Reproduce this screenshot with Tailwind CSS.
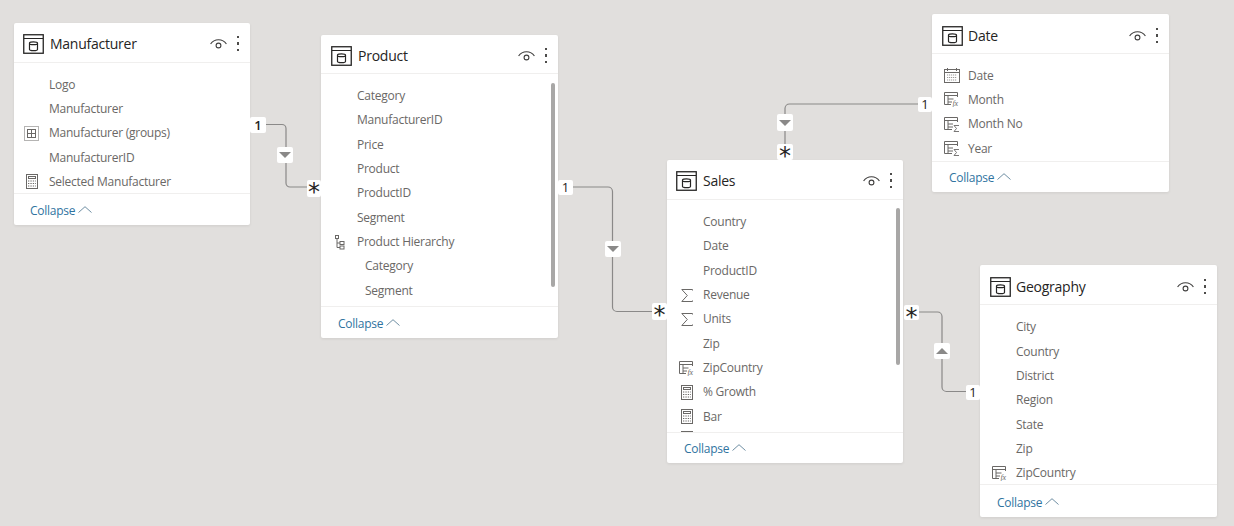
<!DOCTYPE html>
<html>
<head>
<meta charset="utf-8">
<script src="https://cdn.jsdelivr.net/npm/@tailwindcss/browser@4"></script>
</head>
<body class="m-0">
<svg width="0" height="0" class="absolute">
  <defs>
    <symbol id="tbl" viewBox="0 0 21 20" fill="none" stroke="#252423">
      <rect x=".75" y=".75" width="19.5" height="18.5" stroke-width="1.3"/>
      <path d="M1 4.500H20" stroke-width="1"/>
      <path d="M6.500 9c0-1.600 8-1.600 8 0v6.500c0 1.600-8 1.600-8 0zM6.500 9.400c0 1.600 8 1.600 8 0" stroke-width="1.200"/>
    </symbol>
    <symbol id="eye" viewBox="0 0 17 12" fill="none" stroke="#3f3e3d" stroke-width="1.100">
      <path d="M.6 6C4.300 .3 12.700 .3 16.400 6"/>
      <circle cx="8.500" cy="7.500" r="2.400"/>
    </symbol>
    <symbol id="calc" viewBox="0 0 12 15" fill="none" stroke="#6a6866">
      <rect x=".5" y=".5" width="11" height="14"/>
      <rect x="2.500" y="2.500" width="7" height="2"/>
      <path d="M2 7h8M2 9.500h8M2 12h8" stroke-dasharray="1.300 1.100" stroke-width="1.100"/>
    </symbol>
    <symbol id="group" viewBox="0 0 15 15" fill="none" stroke="#6a6866">
      <rect x=".5" y=".5" width="14" height="14" stroke-dasharray="1 1"/>
      <rect x="3.500" y="3.500" width="8" height="8"/>
      <path d="M7.500 3.500v8M3.500 7.500h8"/>
    </symbol>
    <symbol id="hier" viewBox="0 0 10 15" fill="none" stroke="#6a6866">
      <rect x=".5" y=".5" width="3" height="3"/>
      <path d="M2 3.500V12.500H5M2 8H5"/>
      <rect x="5" y="6.500" width="4" height="3"/>
      <rect x="5" y="11" width="4" height="3"/>
    </symbol>
    <symbol id="sum" viewBox="0 0 12 13" fill="none" stroke="#6a6866" stroke-width="1">
      <path d="M11.500 1.500V.5H.8L6.300 6.500.8 12.500H11.500V11.500"/>
    </symbol>
    <symbol id="cal" viewBox="0 0 16 15" fill="none" stroke="#6a6866">
      <rect x=".5" y="1.500" width="15" height="13"/>
      <path d="M1 4.500H15M3.500 0v3M12.500 0v3"/>
      <path d="M3 7h10M3 9.500h10M3 12h10" stroke="#9c9a98" stroke-dasharray="1.200 .8" stroke-width="1.200"/>
    </symbol>
    <symbol id="fx" viewBox="0 0 16 15" fill="none" stroke="#6a6866">
      <path d="M.5 .5H13.500V5M.5 .5V12.500H7M.5 3.500H13.500M4 3.500V12.500M4 7H9.500M4 10H8"/>
      <text x="8.500" y="14" font-family="Liberation Serif, serif" font-style="italic" font-size="8" fill="#6a6866" stroke="none">fx</text>
    </symbol>
    <symbol id="tsum" viewBox="0 0 16 15" fill="none" stroke="#6a6866">
      <path d="M.5 .5H13.500V5M.5 .5V12.500H8M.5 3.500H13.500M4 3.500V12.500M4 7H9M4 10H9"/>
      <path d="M15 8.500H10L12.500 11.500 10 14.500H15" stroke-width=".9"/>
    </symbol>
    <symbol id="chev" viewBox="0 0 14 7" fill="none" stroke="#6f8ea3" stroke-width="1">
      <path d="M.5 6.500 7 .7 13.500 6.500"/>
    </symbol>
  </defs>
</svg>

<div class="relative w-[1234px] h-[526px] overflow-hidden bg-[#e1dfdd] font-['Open_Sans','Noto_Sans',sans-serif]">

  <!-- relationship lines -->
  <svg class="absolute inset-0" width="1234" height="526" fill="none" stroke="#8a8988" stroke-width="1.200">
    <path d="M264 124.500H282a4 4 0 0 1 4 4V183a4 4 0 0 0 4 4H308"/>
    <path d="M572 187H608a4.500 4.500 0 0 1 4.500 4.500V307a4.500 4.500 0 0 0 4.500 4.500H653"/>
    <path d="M919 104H789.500a4.500 4.500 0 0 0-4.500 4.500V146"/>
    <path d="M918 312H937.500a4.500 4.500 0 0 1 4.500 4.500V387a4.500 4.500 0 0 0 4.500 4.500H967"/>
  </svg>

  <!-- Manufacturer -->
  <section class="absolute left-[14px] top-[23px] w-[236px] h-[202px] flex flex-col bg-white rounded-[2px] shadow-[0_1px_3px_rgba(0,0,0,0.08)]">
    <header class="h-[40px] flex items-center border-b border-[#f0efee] shrink-0 pt-[2px] pl-[9px] pr-[11px]">
      <svg class="w-[21px] h-[20px] shrink-0"><use href="#tbl"/></svg>
      <h2 class="ml-[6px] flex-1 text-[14px] font-medium leading-none text-[#252423] tracking-[-0.25px]">Manufacturer</h2>
      <svg class="w-[17px] h-[12px] mr-[10px]"><use href="#eye"/></svg>
      <span class="flex flex-col gap-[4px]"><i class="w-[2px] h-[2.500px] bg-[#4d4c4a]"></i><i class="w-[2px] h-[2.500px] bg-[#4d4c4a]"></i><i class="w-[2px] h-[2.500px] bg-[#4d4c4a]"></i></span>
    </header>
    <ul class="flex-1 overflow-hidden pt-[9.500px] text-[12px] text-[#6a6866] tracking-[-0.25px]">
      <li class="h-[24.330px] flex items-center pl-[35px]">Logo</li>
      <li class="h-[24.330px] flex items-center pl-[35px]">Manufacturer</li>
      <li class="h-[24.330px] flex items-center pl-[10px]"><svg class="w-[15px] h-[15px] mr-[10px]"><use href="#group"/></svg>Manufacturer (groups)</li>
      <li class="h-[24.330px] flex items-center pl-[35px]">ManufacturerID</li>
      <li class="h-[24.330px] flex items-center pl-[12px]"><svg class="w-[12px] h-[15px] mr-[11px]"><use href="#calc"/></svg>Selected Manufacturer</li>
    </ul>
    <footer class="h-[32px] shrink-0 flex items-center border-t border-[#f0efee] pt-[2px] pl-[16px] text-[12px] text-[#2f749f] tracking-[-0.25px]">Collapse<svg class="w-[14px] h-[7px] ml-[3px] -mt-[3px]"><use href="#chev"/></svg></footer>
  </section>

  <!-- Product -->
  <section class="absolute left-[321px] top-[35px] w-[237px] h-[303px] flex flex-col bg-white rounded-[2px] shadow-[0_1px_3px_rgba(0,0,0,0.08)]">
    <header class="h-[39px] flex items-center border-b border-[#f0efee] shrink-0 pt-[3px] pl-[10px] pr-[11px]">
      <svg class="w-[21px] h-[20px] shrink-0"><use href="#tbl"/></svg>
      <h2 class="ml-[6px] flex-1 text-[14px] font-medium leading-none text-[#252423] tracking-[-0.25px]">Product</h2>
      <svg class="w-[17px] h-[12px] mr-[10px]"><use href="#eye"/></svg>
      <span class="flex flex-col gap-[4px]"><i class="w-[2px] h-[2.500px] bg-[#4d4c4a]"></i><i class="w-[2px] h-[2.500px] bg-[#4d4c4a]"></i><i class="w-[2px] h-[2.500px] bg-[#4d4c4a]"></i></span>
    </header>
    <ul class="flex-1 overflow-hidden pt-[10px] text-[12px] text-[#6a6866] tracking-[-0.25px]">
      <li class="h-[24.330px] flex items-center pl-[36px]">Category</li>
      <li class="h-[24.330px] flex items-center pl-[36px]">ManufacturerID</li>
      <li class="h-[24.330px] flex items-center pl-[36px]">Price</li>
      <li class="h-[24.330px] flex items-center pl-[36px]">Product</li>
      <li class="h-[24.330px] flex items-center pl-[36px]">ProductID</li>
      <li class="h-[24.330px] flex items-center pl-[36px]">Segment</li>
      <li class="h-[24.330px] flex items-center pl-[14px]"><svg class="w-[10px] h-[15px] mr-[12px]"><use href="#hier"/></svg>Product Hierarchy</li>
      <li class="h-[24.330px] flex items-center pl-[44px]">Category</li>
      <li class="h-[24.330px] flex items-center pl-[44px]">Segment</li>
    </ul>
    <footer class="h-[32px] shrink-0 flex items-center border-t border-[#f0efee] pt-[2px] pl-[17px] text-[12px] text-[#2f749f] tracking-[-0.25px]">Collapse<svg class="w-[14px] h-[7px] ml-[3px] -mt-[3px]"><use href="#chev"/></svg></footer>
    <div class="absolute left-[230px] top-[48px] w-[4px] h-[204px] rounded-full bg-[#a8a7a6]"></div>
  </section>

  <!-- Sales -->
  <section class="absolute left-[667px] top-[160px] w-[236px] h-[303px] flex flex-col bg-white rounded-[2px] shadow-[0_1px_3px_rgba(0,0,0,0.08)]">
    <header class="h-[40px] flex items-center border-b border-[#f0efee] shrink-0 pt-[2px] pl-[9px] pr-[11px]">
      <svg class="w-[21px] h-[20px] shrink-0"><use href="#tbl"/></svg>
      <h2 class="ml-[6px] flex-1 text-[14px] font-medium leading-none text-[#252423] tracking-[-0.25px]">Sales</h2>
      <svg class="w-[17px] h-[12px] mr-[10px]"><use href="#eye"/></svg>
      <span class="flex flex-col gap-[4px]"><i class="w-[2px] h-[2.500px] bg-[#4d4c4a]"></i><i class="w-[2px] h-[2.500px] bg-[#4d4c4a]"></i><i class="w-[2px] h-[2.500px] bg-[#4d4c4a]"></i></span>
    </header>
    <ul class="flex-1 overflow-hidden pt-[10px] text-[12px] text-[#6a6866] tracking-[-0.25px]">
      <li class="h-[24.330px] flex items-center pl-[36px]">Country</li>
      <li class="h-[24.330px] flex items-center pl-[36px]">Date</li>
      <li class="h-[24.330px] flex items-center pl-[36px]">ProductID</li>
      <li class="h-[24.330px] flex items-center pl-[14px]"><svg class="w-[12px] h-[13px] mr-[10px]"><use href="#sum"/></svg>Revenue</li>
      <li class="h-[24.330px] flex items-center pl-[14px]"><svg class="w-[12px] h-[13px] mr-[10px]"><use href="#sum"/></svg>Units</li>
      <li class="h-[24.330px] flex items-center pl-[36px]">Zip</li>
      <li class="h-[24.330px] flex items-center pl-[12px]"><svg class="w-[16px] h-[15px] mr-[8px]"><use href="#fx"/></svg>ZipCountry</li>
      <li class="h-[24.330px] flex items-center pl-[14px]"><svg class="w-[12px] h-[15px] mr-[10px]"><use href="#calc"/></svg>% Growth</li>
      <li class="h-[24.330px] flex items-center pl-[14px]"><svg class="w-[12px] h-[15px] mr-[10px]"><use href="#calc"/></svg>Bar</li>
      <li class="h-[24.330px] flex items-start pt-[2px] pl-[14px]"><svg class="w-[12px] h-[15px] mr-[10px]"><use href="#calc"/></svg></li>
    </ul>
    <footer class="h-[31px] shrink-0 flex items-center border-t border-[#f0efee] pt-[2px] pl-[17px] text-[12px] text-[#2f749f] tracking-[-0.25px]">Collapse<svg class="w-[14px] h-[7px] ml-[3px] -mt-[3px]"><use href="#chev"/></svg></footer>
    <div class="absolute left-[229px] top-[48px] w-[4px] h-[157px] rounded-full bg-[#a8a7a6]"></div>
  </section>

  <!-- Date -->
  <section class="absolute left-[932px] top-[14px] w-[237px] h-[178px] flex flex-col bg-white rounded-[2px] shadow-[0_1px_3px_rgba(0,0,0,0.08)]">
    <header class="h-[40px] flex items-center border-b border-[#f0efee] shrink-0 pt-[4px] pl-[10px] pr-[11px]">
      <svg class="w-[21px] h-[20px] shrink-0"><use href="#tbl"/></svg>
      <h2 class="ml-[5px] flex-1 text-[14px] font-medium leading-none text-[#252423] tracking-[-0.25px]">Date</h2>
      <svg class="w-[17px] h-[12px] mr-[10px]"><use href="#eye"/></svg>
      <span class="flex flex-col gap-[4px]"><i class="w-[2px] h-[2.500px] bg-[#4d4c4a]"></i><i class="w-[2px] h-[2.500px] bg-[#4d4c4a]"></i><i class="w-[2px] h-[2.500px] bg-[#4d4c4a]"></i></span>
    </header>
    <ul class="flex-1 overflow-hidden pt-[9.500px] text-[12px] text-[#6a6866] tracking-[-0.25px]">
      <li class="h-[24.330px] flex items-center pl-[12px]"><svg class="w-[16px] h-[15px] mr-[8px]"><use href="#cal"/></svg>Date</li>
      <li class="h-[24.330px] flex items-center pl-[12px]"><svg class="w-[16px] h-[15px] mr-[8px]"><use href="#fx"/></svg>Month</li>
      <li class="h-[24.330px] flex items-center pl-[12px]"><svg class="w-[16px] h-[15px] mr-[8px]"><use href="#tsum"/></svg>Month No</li>
      <li class="h-[24.330px] flex items-center pl-[12px]"><svg class="w-[16px] h-[15px] mr-[8px]"><use href="#tsum"/></svg>Year</li>
    </ul>
    <footer class="h-[31px] shrink-0 flex items-center border-t border-[#f0efee] pt-[2px] pl-[17px] text-[12px] text-[#2f749f] tracking-[-0.25px]">Collapse<svg class="w-[14px] h-[7px] ml-[3px] -mt-[3px]"><use href="#chev"/></svg></footer>
  </section>

  <!-- Geography -->
  <section class="absolute left-[980px] top-[265px] w-[237px] h-[252px] flex flex-col bg-white rounded-[2px] shadow-[0_1px_3px_rgba(0,0,0,0.08)]">
    <header class="h-[40px] flex items-center border-b border-[#f0efee] shrink-0 pt-[4px] pl-[10px] pr-[11px]">
      <svg class="w-[21px] h-[20px] shrink-0"><use href="#tbl"/></svg>
      <h2 class="ml-[5px] flex-1 text-[14px] font-medium leading-none text-[#252423] tracking-[-0.25px]">Geography</h2>
      <svg class="w-[17px] h-[12px] mr-[10px]"><use href="#eye"/></svg>
      <span class="flex flex-col gap-[4px]"><i class="w-[2px] h-[2.500px] bg-[#4d4c4a]"></i><i class="w-[2px] h-[2.500px] bg-[#4d4c4a]"></i><i class="w-[2px] h-[2.500px] bg-[#4d4c4a]"></i></span>
    </header>
    <ul class="flex-1 overflow-hidden pt-[10.100px] text-[12px] text-[#6a6866] tracking-[-0.25px]">
      <li class="h-[24.330px] flex items-center pl-[36px]">City</li>
      <li class="h-[24.330px] flex items-center pl-[36px]">Country</li>
      <li class="h-[24.330px] flex items-center pl-[36px]">District</li>
      <li class="h-[24.330px] flex items-center pl-[36px]">Region</li>
      <li class="h-[24.330px] flex items-center pl-[36px]">State</li>
      <li class="h-[24.330px] flex items-center pl-[36px]">Zip</li>
      <li class="h-[24.330px] flex items-center pl-[12px]"><svg class="w-[16px] h-[15px] mr-[8px]"><use href="#fx"/></svg>ZipCountry</li>
    </ul>
    <footer class="h-[33px] shrink-0 flex items-center border-t border-[#f0efee] pt-[3px] pl-[17px] text-[12px] text-[#2f749f] tracking-[-0.25px]">Collapse<svg class="w-[14px] h-[7px] ml-[3px] -mt-[3px]"><use href="#chev"/></svg></footer>
  </section>

  <!-- cardinality badges -->
  <span class="absolute left-[250px] top-[117px] w-[16px] h-[16px] flex items-center justify-center bg-white text-[13px] font-semibold leading-none text-[#252423] rounded-[2px]">1</span>
  <span class="absolute left-[307px] top-[180px] w-[14px] h-[17px] flex items-center justify-center bg-white rounded-[2px] font-['DejaVu_Sans',sans-serif] text-[24px] leading-none text-[#252423] pt-[7px]">*</span>
  <span class="absolute left-[558px] top-[180px] w-[15px] h-[15px] flex items-center justify-center bg-white text-[13px] font-medium leading-none text-[#252423] rounded-[2px]">1</span>
  <span class="absolute left-[652px] top-[303px] w-[15px] h-[17px] flex items-center justify-center bg-white rounded-[2px] font-['DejaVu_Sans',sans-serif] text-[24px] leading-none text-[#252423] pt-[7px]">*</span>
  <span class="absolute left-[918px] top-[97px] w-[14px] h-[15px] flex items-center justify-center bg-white text-[13px] font-medium leading-none text-[#252423] rounded-[2px]">1</span>
  <span class="absolute left-[777px] top-[144px] w-[16px] h-[16px] flex items-center justify-center bg-white rounded-[2px] font-['DejaVu_Sans',sans-serif] text-[24px] leading-none text-[#252423] pt-[8px]">*</span>
  <span class="absolute left-[904px] top-[305px] w-[15px] h-[15px] flex items-center justify-center bg-white rounded-[2px] font-['DejaVu_Sans',sans-serif] text-[24px] leading-none text-[#252423] pt-[9px]">*</span>
  <span class="absolute left-[966px] top-[385px] w-[14px] h-[15px] flex items-center justify-center bg-white text-[13px] font-medium leading-none text-[#252423] rounded-[2px]">1</span>

  <!-- direction arrows -->
  <span class="absolute left-[277px] top-[147px] w-[16px] h-[16px] flex items-center justify-center bg-white rounded-[2px]"><svg width="12" height="6" viewBox="0 0 12 6"><path d="M0 0H12L6 6Z" fill="#8a8988"/></svg></span>
  <span class="absolute left-[605px] top-[241px] w-[16px] h-[16px] flex items-center justify-center bg-white rounded-[2px]"><svg width="12" height="6" viewBox="0 0 12 6"><path d="M0 0H12L6 6Z" fill="#8a8988"/></svg></span>
  <span class="absolute left-[777px] top-[114px] w-[16px] h-[17px] flex items-center justify-center bg-white rounded-[2px]"><svg width="12" height="6" viewBox="0 0 12 6"><path d="M0 0H12L6 6Z" fill="#8a8988"/></svg></span>
  <span class="absolute left-[934px] top-[343px] w-[16px] h-[16px] flex items-center justify-center bg-white rounded-[2px]"><svg width="12" height="6" viewBox="0 0 12 6"><path d="M6 0 12 6H0Z" fill="#8a8988"/></svg></span>
</div>
</body>
</html>
